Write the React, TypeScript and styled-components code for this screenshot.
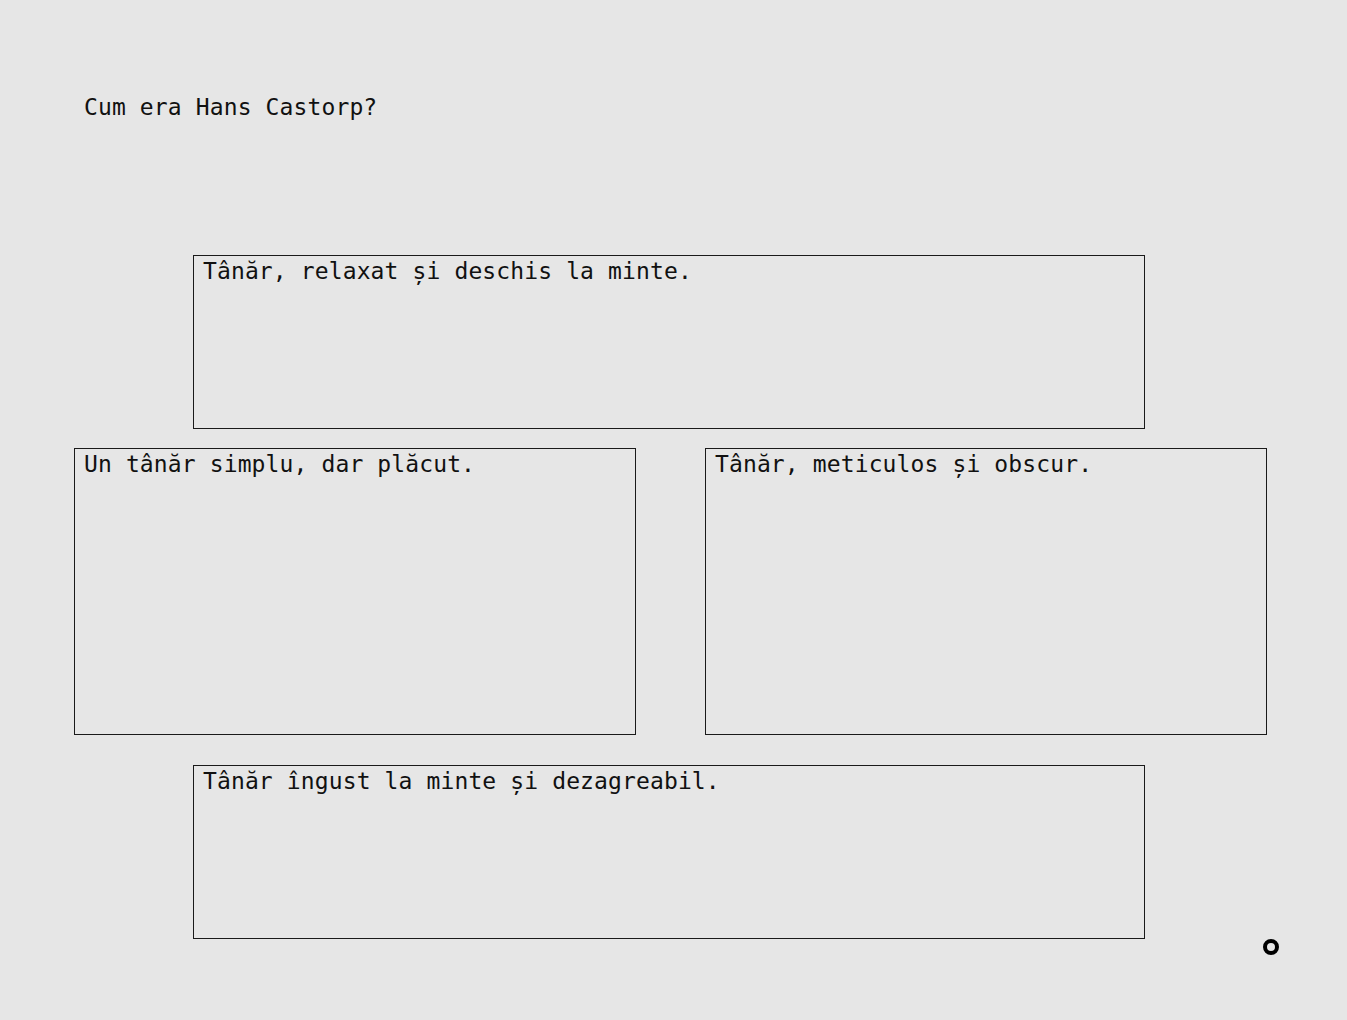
import React from 'react';
import styled, { createGlobalStyle } from 'styled-components';

const GlobalStyle = createGlobalStyle`
  html, body {
    margin: 0;
    padding: 0;
    background: #e6e6e6;
  }
  body {
    font-family: 'DejaVu Sans Mono', 'Liberation Mono', monospace;
    font-size: 23px;
    letter-spacing: 0.12px;
    color: #111;
  }
`;

const Page = styled.div`
  position: relative;
  width: 1347px;
  height: 1020px;
  padding: 92px 0 0 74px;
  box-sizing: border-box;
`;

const Question = styled.div`
  line-height: 30px;
  margin: 0 0 133px 10px;
`;

const Board = styled.div`
  width: 1193px;
  display: flex;
  flex-direction: column;
`;

const Row = styled.div<{ gap: number }>`
  display: flex;
  gap: 69px;
  margin-bottom: ${(p) => p.gap}px;
`;

const Answer = styled.div<{ w: number; h: number; indent?: number }>`
  box-sizing: border-box;
  width: ${(p) => p.w}px;
  height: ${(p) => p.h}px;
  margin-left: ${(p) => p.indent || 0}px;
  border: 1px solid #1a1a1a;
  padding: 0 9px;
  line-height: 30px;
  white-space: nowrap;
`;

const Dot = styled.div`
  position: absolute;
  left: 1263px;
  top: 939px;
  width: 16px;
  height: 16px;
  box-sizing: border-box;
  border: 4px solid #000;
  border-radius: 50%;
`;

const App = () => {
  return (
    <Page>
      <GlobalStyle />
      <Question>Cum era Hans Castorp?</Question>
      <Board>
        <Row gap={19}>
          <Answer w={952} h={174} indent={119}>
            Tânăr, relaxat și deschis la minte.
          </Answer>
        </Row>
        <Row gap={30}>
          <Answer w={562} h={287}>
            Un tânăr simplu, dar plăcut.
          </Answer>
          <Answer w={562} h={287}>
            Tânăr, meticulos și obscur.
          </Answer>
        </Row>
        <Row gap={0}>
          <Answer w={952} h={174} indent={119}>
            Tânăr îngust la minte și dezagreabil.
          </Answer>
        </Row>
      </Board>
      <Dot />
    </Page>
  );
};

export default App;
